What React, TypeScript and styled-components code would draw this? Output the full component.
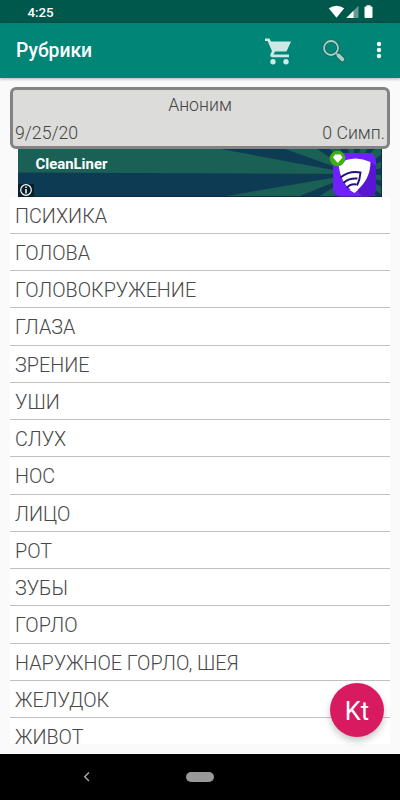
import React from 'react';
import styled, { createGlobalStyle } from 'styled-components';

const GlobalStyle = createGlobalStyle`
  * { box-sizing: border-box; }
  body { margin: 0; font-family: Roboto, "Noto Sans", sans-serif; }
  svg { display: block; flex: none; }
`;

const Screen = styled.div`
  width: 400px;
  height: 800px;
  display: flex;
  flex-direction: column;
  overflow: hidden;
  background: #fafafa;
`;

const StatusBar = styled.div`
  height: 23px;
  flex: none;
  display: flex;
  align-items: center;
  justify-content: space-between;
  padding: 1px 26px 0 27.5px;
  background: #00574b;
  color: #fff;
  font-size: 13.3px;
  font-weight: 500;
`;

const AppBar = styled.header`
  height: 54.5px;
  flex: none;
  display: flex;
  align-items: center;
  padding: 0 18.5px 0 16px;
  background: #008577;
  box-shadow: 0 1px 3px rgba(0, 0, 0, 0.3);
  z-index: 1;
`;

const Title = styled.h1`
  flex: 1;
  margin: 0;
  color: #fff;
  font-size: 19.3px;
  font-weight: 500;
  line-height: 24px;
  padding-top: 2px;
`;

const Actions = styled.div`
  display: flex;
  align-items: center;
`;

const Content = styled.main`
  flex: 1;
  min-height: 0;
  display: flex;
  flex-direction: column;
  padding: 9.5px 10px 9.5px;
`;

const PatientCard = styled.section`
  height: 61.5px;
  flex: none;
  border: 3px solid #838383;
  border-radius: 6px;
  background: #dcdcdb;
  padding: 0 2px;
  color: #454545;
  font-size: 17.7px;
  font-weight: 300;
  line-height: 27.5px;
  position: relative;
  z-index: 1;
`;

const PatientName = styled.div`
  text-align: center;
  padding-top: 2px;
`;

const PatientInfo = styled.div`
  display: flex;
  justify-content: space-between;
`;

const Banner = styled.div`
  height: 48px;
  flex: none;
  margin: 0 8px;
  display: grid;

  > * { grid-area: 1 / 1; }
`;

const BannerTitle = styled.div`
  padding: 6px 0 0 17.5px;
  color: #fff;
  font-size: 14.9px;
  line-height: 18px;
  font-weight: 700;
`;

const Rubrics = styled.ul`
  flex: 1;
  min-height: 0;
  overflow: hidden;
  margin: 0;
  padding: 0;
  list-style: none;
  background: #fff;
`;

const Rubric = styled.li`
  height: 37.25px;
  padding: 2px 5px 0;
  border-bottom: 1px solid #c0c0c0;
  color: #484848;
  font-size: 19.75px;
  font-weight: 300;
  line-height: 35px;
  white-space: nowrap;
`;

const Fab = styled.button`
  position: absolute;
  left: 330px;
  top: 683px;
  width: 54px;
  height: 54px;
  border: 0;
  padding: 1px 0 0;
  border-radius: 50%;
  background: #d81b60;
  color: #fff;
  font: 400 25.5px/54px Roboto, sans-serif;
  box-shadow: 0 4px 7px rgba(0, 0, 0, 0.22);
  z-index: 2;
`;

const NavBar = styled.nav`
  height: 46.5px;
  flex: none;
  display: grid;
  grid-template-columns: 173px 54px 173px;
  align-items: center;
  justify-items: center;
  background: #000;
`;

const HomePill = styled.div`
  width: 28px;
  height: 10.5px;
  border-radius: 6px;
  background: #999;
`;

const rubrics = [
  'ПСИХИКА', 'ГОЛОВА', 'ГОЛОВОКРУЖЕНИЕ', 'ГЛАЗА', 'ЗРЕНИЕ', 'УШИ', 'СЛУХ', 'НОС',
  'ЛИЦО', 'РОТ', 'ЗУБЫ', 'ГОРЛО', 'НАРУЖНОЕ ГОРЛО, ШЕЯ', 'ЖЕЛУДОК', 'ЖИВОТ',
];

const StatusIcons = () => (
  <svg width="46" height="16" viewBox="0 0 46 16" fill="#fff">
    <path d="M.8 4.2Q8.5-.8 16.2 4.2L8.5 13.8Z" />
    <path d="M30.500 1.800V14H18.300Z" opacity=".4" />
    <path d="M25.500 6.800V14H18.300Z" />
    <path d="M38.500 1.200h4v1.200h1q1 0 1 1V13q0 1-1 1h-6q-1 0-1-1V3.400q0-1 1-1h1Z" />
  </svg>
);

const CartIcon = () => (
  <svg width="28" height="28" viewBox="0 0 28 28">
    <path d="M0 1.500H4.500L6 4.500H26L21.500 14.500H10L8.500 17.500H24V20.200H7Q5 20 5.300 17.500L7 14 2.600 4H0Z" fill="#cde9e5" />
    <circle cx="8" cy="24.800" r="2.700" fill="#cde9e5" />
    <circle cx="21" cy="24.800" r="2.700" fill="#cde9e5" />
  </svg>
);

const SearchIcon = () => (
  <svg width="24" height="24" viewBox="0 0 24 24" fill="none">
    <path d="M16.300 16.300L20.400 20.400" stroke="#24564f" strokeWidth="5.400" strokeLinecap="round" />
    <path d="M13.500 13.500L16 16" stroke="#24564f" strokeWidth="3" />
    <circle cx="9" cy="9" r="7" stroke="#24564f" strokeWidth="3.200" />
    <circle cx="9" cy="9" r="7" stroke="#9fd2cb" strokeWidth="1.800" />
    <path d="M14 14L16 16" stroke="#9fd2cb" strokeWidth="1.500" />
    <path d="M16.500 16.500L20.400 20.400" stroke="#9fd2cb" strokeWidth="3.900" strokeLinecap="round" />
  </svg>
);

const MoreIcon = () => (
  <svg width="6" height="18" viewBox="0 0 6 18" fill="#f4fbfa">
    <circle cx="3" cy="3" r="2.200" />
    <circle cx="3" cy="9" r="2.200" />
    <circle cx="3" cy="15" r="2.200" />
  </svg>
);

const BannerArt = () => (
  <svg width="364" height="48" viewBox="0 0 364 48">
    <rect width="364" height="48" fill="#0e3b54" />
    <g fill="#1b6054">
      <path d="M0 0H203L337 25 0 23.500Z" />
      <path d="M203 48L337 25 279 48Z" />
      <path d="M267 0H299L337 25Z" />
      <path d="M300 48L337 25 316 48Z" />
      <path d="M312 0H322L337 25Z" />
      <path d="M330 0H336L337 25Z" />
      <path d="M342 0H349L337 25Z" />
      <path d="M356 0H364V5L337 25Z" />
      <path d="M364 12V19L337 25Z" />
      <path d="M364 26V32L337 25Z" />
      <path d="M364 38V46L337 25Z" />
      <path d="M352 48H359L337 25Z" />
    </g>
    <path d="M363.500 0V47.500H0" fill="none" stroke="#102b43" />
    <rect y="35" width="16" height="13" fill="#081f2b" />
    <circle cx="8" cy="41" r="5.300" fill="none" stroke="#fff" strokeWidth="1.200" />
    <path d="M8 40V44.500M8 37.500V39" stroke="#fff" strokeWidth="1.500" />
    <rect x="315" y="4" width="43" height="43.500" rx="8" fill="#7020fb" />
    <path d="M352 12L358 17V39Q358 47.500 350 47.500H345L339 42Z" fill="#5a14d4" />
    <path d="M320.500 14Q325 15 328 11Q340 7 352.500 13Q352.500 31 337 43Q322 36 320.500 14Z" fill="#fff" />
    <g fill="none" stroke="#24127b" strokeWidth="1.900">
      <path d="M322.500 28.500Q331 21.500 342.500 23.500Q342 31 339 36.500" />
      <path d="M325.500 34Q330 29 339.500 29.500" />
      <path d="M329 39Q332 34.500 338.500 35.500" />
    </g>
    <path d="M331.500 41L336 38.500 340 41 336.500 44Z" fill="#fff" />
    <circle cx="319.500" cy="9.500" r="7.800" fill="#3faf13" />
    <path d="M317 5.500H322.500L324.500 8.500 319.800 14 315 8.500Z" fill="#fff" />
  </svg>
);

const BackIcon = () => (
  <svg width="8" height="12" viewBox="0 0 8 12">
    <path d="M6 1.500L1.700 5.800 6 10.100" fill="none" stroke="#aaa" strokeWidth="1.400" />
  </svg>
);

const ActionSlot = styled.span`
  margin-right: 29.5px;
  padding-top: 1px;
`;

export default function App() {
  return (
    <>
      <GlobalStyle />
      <Screen>
        <StatusBar>
          <span>4:25</span>
          <StatusIcons />
        </StatusBar>
        <AppBar>
          <Title>Рубрики</Title>
          <Actions>
            <ActionSlot><CartIcon /></ActionSlot>
            <ActionSlot><SearchIcon /></ActionSlot>
            <MoreIcon />
          </Actions>
        </AppBar>
        <Content>
          <PatientCard>
            <PatientName>Аноним</PatientName>
            <PatientInfo>
              <span>9/25/20</span>
              <span>0 Симп.</span>
            </PatientInfo>
          </PatientCard>
          <Banner>
            <BannerArt />
            <BannerTitle>CleanLiner</BannerTitle>
          </Banner>
          <Rubrics>
            {rubrics.map((name) => <Rubric key={name}>{name}</Rubric>)}
          </Rubrics>
        </Content>
        <NavBar>
          <BackIcon />
          <HomePill />
        </NavBar>
        <Fab>Kt</Fab>
      </Screen>
    </>
  );
}
